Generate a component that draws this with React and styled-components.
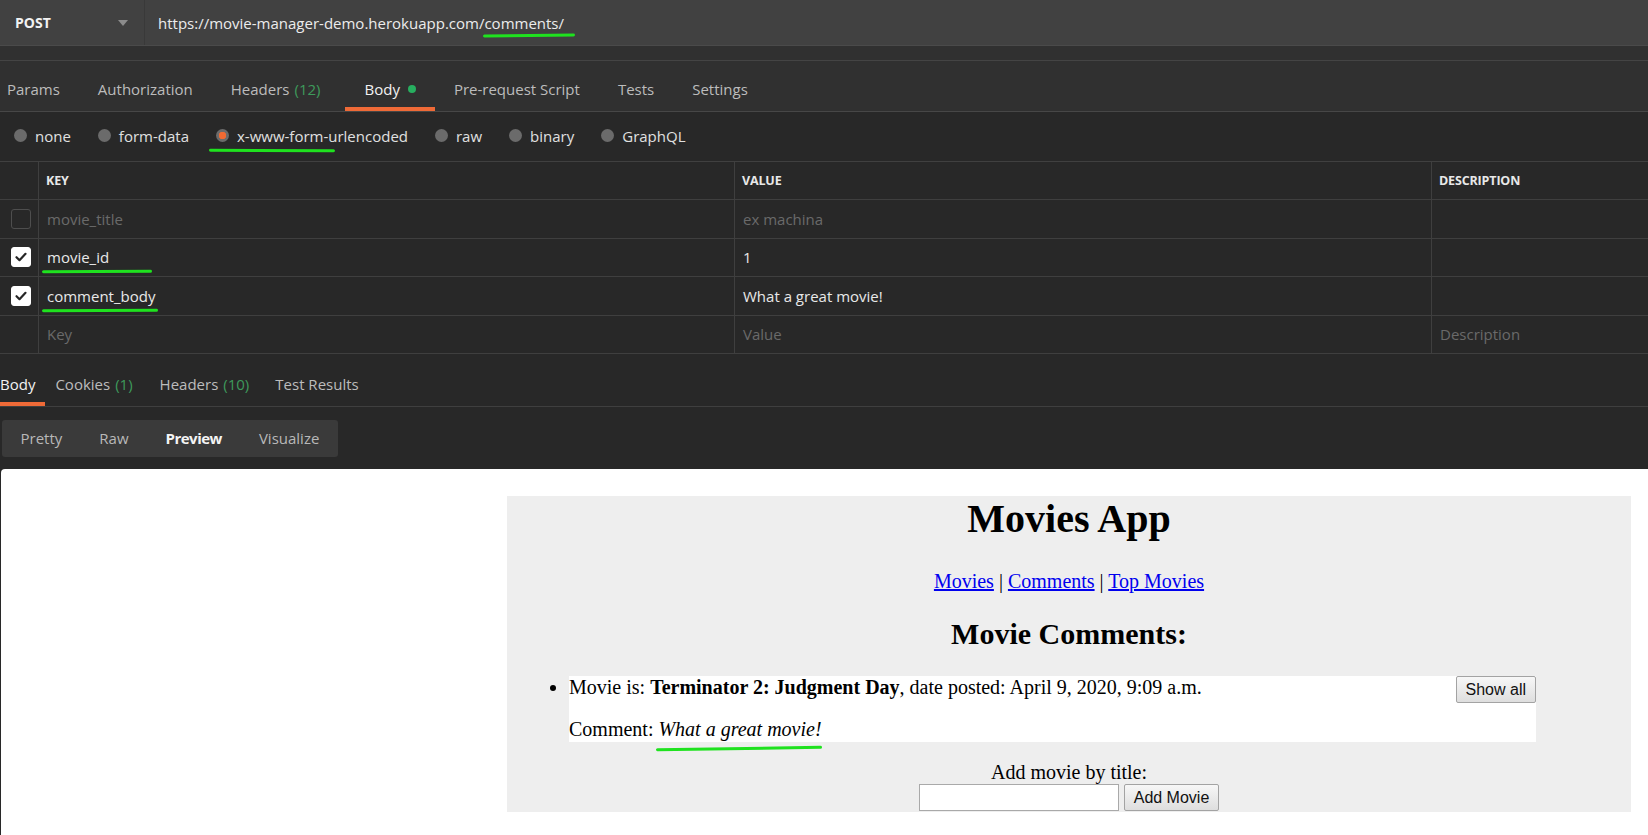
import React from 'react';
import styled, { createGlobalStyle } from 'styled-components';

const GlobalStyle = createGlobalStyle`
    html, body {
        margin: 0;
        padding: 0;
        background: #282828;
    }
    body {
        font-family: "Open Sans", "Liberation Sans", sans-serif;
        overflow: hidden;
    }
`;

const Page = styled.div`
    display: flex;
    flex-direction: column;
    height: 100vh;
`;

const Header = styled.div`
    background: #303030;
`;

const UrlBar = styled.div`
    display: flex;
    height: 45px;
    background: #414141;
    border-bottom: 1px solid #4a4a4a;
`;

const MethodSelect = styled.div`
    display: flex;
    align-items: center;
    justify-content: space-between;
    box-sizing: border-box;
    width: 145px;
    padding: 0 16px 0 15px;
    border-right: 1px solid #393939;
    color: #f2f2f2;
    font-size: 14px;
    font-weight: 700;
`;

const Caret = styled.span`
    width: 0;
    height: 0;
    border-left: 5px solid transparent;
    border-right: 5px solid transparent;
    border-top: 6px solid #8c8c8c;
`;

const UrlText = styled.div`
    display: flex;
    align-items: center;
    padding-left: 13px;
    color: #ececec;
    font-size: 15px;
`;

const Marked = styled.span`
    position: relative;
`;

const Scribble = styled.span`
    position: absolute;
    left: ${(p) => p.$left}px;
    top: ${(p) => p.$top}px;
    width: ${(p) => p.$width}px;
    height: 3px;
    border-radius: 2px;
    background: #1fe21f;
    transform: rotate(${(p) => p.$tilt || 0}deg);
    pointer-events: none;
`;

const Spacer = styled.div`
    height: 14px;
`;

const TabRow = styled.div`
    display: flex;
    height: 50px;
    border-top: 1px solid #444;
    border-bottom: 1px solid #474747;
    margin-left: -12px;
`;

const Tab = styled.div`
    display: flex;
    align-items: center;
    padding: 6px 19px 0;
    margin-right: ${(p) => p.$gap || 0}px;
    font-size: 15px;
    color: ${(p) => (p.$active ? '#f2f2f2' : '#bcbcbc')};
    box-shadow: ${(p) => (p.$active ? 'inset 0 -4px 0 #ef6a37' : 'none')};
`;

const Count = styled.span`
    margin-left: 5px;
    color: #3e9a5b;
`;

const Dot = styled.span`
    width: 8px;
    height: 8px;
    margin-left: 8px;
    border-radius: 50%;
    background: #27ae5f;
`;

const BodyTypes = styled.div`
    display: flex;
    align-items: center;
    gap: 27px;
    height: 50px;
    padding: 0 0 2px 14px;
    box-sizing: border-box;
    border-bottom: 1px solid #404040;
`;

const RadioOption = styled.label`
    position: relative;
    display: flex;
    align-items: center;
    gap: 8px;
    color: #e0e0e0;
    font-size: 15px;
`;

const RadioDot = styled.span`
    width: 13px;
    height: 13px;
    border-radius: 50%;
    background: ${(p) => (p.$checked
        ? 'radial-gradient(circle, #f06a33 0 3.5px, #6b6b6b 4px)'
        : '#6b6b6b')};
`;

const Row = styled.div`
    display: grid;
    grid-template-columns: 39px 696px 697px 1fr;
    height: ${(p) => (p.$head ? 37 : 37.5)}px;
    border-bottom: 1px solid #3f3f3f;
`;

const Cell = styled.div`
    display: flex;
    align-items: center;
    padding-left: ${(p) => (p.$head ? 7 : 8)}px;
    border-right: 1px solid #3f3f3f;
    font-size: ${(p) => (p.$head ? 12.5 : 15)}px;
    font-weight: ${(p) => (p.$head ? 700 : 400)};
    color: ${(p) => (p.$dim ? '#6a6a6a' : '#e8e8e8')};
    letter-spacing: ${(p) => (p.$head ? '-0.15px' : '0')};

    &:last-child {
        border-right: none;
    }
`;

const CheckCell = styled.div`
    display: flex;
    align-items: center;
    justify-content: center;
    padding-left: 3px;
    border-right: 1px solid #3f3f3f;
`;

const Checkbox = styled.span`
    display: flex;
    align-items: center;
    justify-content: center;
    box-sizing: border-box;
    width: 20px;
    height: 20px;
    border-radius: 3px;
    background: ${(p) => (p.$checked ? '#ffffff' : 'transparent')};
    border: 1px solid ${(p) => (p.$checked ? '#ffffff' : '#4e4e4e')};
`;

const ResponseTabs = styled.div`
    display: flex;
    height: 44px;
    margin-top: 8px;
    margin-left: -10px;
    border-bottom: 1px solid #3f3f3f;
`;

const ResponseTab = styled(Tab)`
    padding: 0 10px;
`;

const FormatBar = styled.div`
    padding: 13px 0 12px 2px;
`;

const Segmented = styled.div`
    display: inline-flex;
    height: 37px;
    border-radius: 3px;
    background: #3a3a3a;
`;

const SegItem = styled.span`
    display: flex;
    align-items: center;
    padding: 0 18.5px 2px;
    font-size: 15px;
    font-weight: ${(p) => (p.$active ? 700 : 400)};
    color: ${(p) => (p.$active ? '#f4f4f4' : '#b8b8b8')};
    letter-spacing: ${(p) => (p.$active ? '-0.5px' : '0')};
`;

const Preview = styled.div`
    flex: 1;
    margin-left: 1px;
    padding-top: 27px;
    background: #ffffff;
    border-radius: 4px 0 0 0;
    overflow: hidden;
`;

const MoviesBox = styled.div`
    width: 1124px;
    margin-left: 506px;
    padding: 0 0 1px;
    background: #eeeeee;
    color: #000;
    font-family: "Liberation Serif", "Times New Roman", serif;
    font-size: 20px;
    line-height: 23px;
    text-align: center;
`;

const Title = styled.h1`
    margin: 0;
    font-size: 40px;
    line-height: 46px;
`;

const Nav = styled.p`
    margin: 28px 0 0;
`;

const Link = styled.a`
    color: #0000ee;
    text-decoration: underline;
`;

const SectionTitle = styled.h2`
    margin: 23px 0 0;
    font-size: 30px;
    line-height: 35px;
`;

const CommentList = styled.ul`
    margin: 25px 95px 0 0;
    padding-left: 62px;
    text-align: left;
    list-style: disc;
`;

const CommentItem = styled.li`
    padding-bottom: 1px;
    background: #ffffff;
`;

const CommentLine = styled.div`
    margin-top: 19px;
`;

const NativeButton = styled.button`
    box-sizing: border-box;
    height: 27px;
    padding: 0 9px;
    border: 1px solid #a3a3a3;
    border-radius: 2px;
    background: linear-gradient(#f7f7f7, #dedede);
    color: #111;
    font-family: "Liberation Sans", Arial, sans-serif;
    font-size: 16px;
    line-height: 25px;
    float: ${(p) => (p.$right ? 'right' : 'none')};
`;

const AddForm = styled.div`
    margin-top: 19px;
`;

const InputRow = styled.div`
    display: flex;
    justify-content: center;
    gap: 5px;
`;

const TitleInput = styled.input`
    box-sizing: border-box;
    width: 200px;
    height: 27px;
    border: 1px solid #a9a9a9;
    background: #fff;
`;

const CheckMark = () => (
    <svg width="14" height="14" viewBox="0 0 14 14">
        <path d="M2.5 7.2l3 3 6-6.4" fill="none" stroke="#262626" strokeWidth="2.2" strokeLinecap="round" strokeLinejoin="round" />
    </svg>
);

const params = [
    { key: 'movie_title', value: 'ex machina', checked: false, dim: true },
    { key: 'movie_id', value: '1', checked: true, mark: 110 },
    { key: 'comment_body', value: 'What a great movie!', checked: true, mark: 116 },
];

const bodyTypes = ['none', 'form-data', 'x-www-form-urlencoded', 'raw', 'binary', 'GraphQL'];

const App = () => (
    <Page>
        <GlobalStyle />
        <Header>
            <UrlBar>
                <MethodSelect>
                    POST
                    <Caret />
                </MethodSelect>
                <UrlText>
                    https://movie-manager-demo.herokuapp.com/
                    <Marked>
                        comments/
                        <Scribble $left={-1} $top={21} $width={92} $tilt={-0.6} />
                    </Marked>
                </UrlText>
            </UrlBar>
            <Spacer />
            <TabRow>
                <Tab>Params</Tab>
                <Tab>Authorization</Tab>
                <Tab $gap={6}>Headers<Count>(12)</Count></Tab>
                <Tab $active>Body<Dot /></Tab>
                <Tab>Pre-request Script</Tab>
                <Tab>Tests</Tab>
                <Tab>Settings</Tab>
            </TabRow>
        </Header>
        <BodyTypes>
            {bodyTypes.map((type) => (
                <RadioOption key={type}>
                    <RadioDot $checked={type === 'x-www-form-urlencoded'} />
                    {type}
                    {type === 'x-www-form-urlencoded' && (
                        <Scribble $left={-7} $top={23} $width={126} $tilt={0.3} />
                    )}
                </RadioOption>
            ))}
        </BodyTypes>
        <div>
            <Row $head>
                <CheckCell />
                <Cell $head>KEY</Cell>
                <Cell $head>VALUE</Cell>
                <Cell $head>DESCRIPTION</Cell>
            </Row>
            {params.map((p) => (
                <Row key={p.key}>
                    <CheckCell>
                        <Checkbox $checked={p.checked}>{p.checked && <CheckMark />}</Checkbox>
                    </CheckCell>
                    <Cell $dim={p.dim}>
                        <Marked>
                            {p.key}
                            {p.mark && <Scribble $left={-5} $top={23} $width={p.mark} $tilt={-0.3} />}
                        </Marked>
                    </Cell>
                    <Cell $dim={p.dim}>{p.value}</Cell>
                    <Cell />
                </Row>
            ))}
            <Row>
                <CheckCell />
                <Cell $dim>Key</Cell>
                <Cell $dim>Value</Cell>
                <Cell $dim>Description</Cell>
            </Row>
        </div>
        <ResponseTabs>
            <ResponseTab $active>Body</ResponseTab>
            <ResponseTab $gap={7}>Cookies<Count>(1)</Count></ResponseTab>
            <ResponseTab $gap={6}>Headers<Count>(10)</Count></ResponseTab>
            <ResponseTab>Test Results</ResponseTab>
        </ResponseTabs>
        <FormatBar>
            <Segmented>
                <SegItem>Pretty</SegItem>
                <SegItem>Raw</SegItem>
                <SegItem $active>Preview</SegItem>
                <SegItem>Visualize</SegItem>
            </Segmented>
        </FormatBar>
        <Preview>
            <MoviesBox>
                <Title>Movies App</Title>
                <Nav>
                    <Link href="#movies">Movies</Link> | <Link href="#comments">Comments</Link> | <Link href="#top">Top Movies</Link>
                </Nav>
                <SectionTitle>Movie Comments:</SectionTitle>
                <CommentList>
                    <CommentItem>
                        <NativeButton $right>Show all</NativeButton>
                        Movie is: <b>Terminator 2: Judgment Day</b>, date posted: April 9, 2020, 9:09 a.m.
                        <CommentLine>
                            Comment:{' '}
                            <Marked>
                                <i>What a great movie!</i>
                                <Scribble $left={-2} $top={29} $width={166} $tilt={-0.8} />
                            </Marked>
                        </CommentLine>
                    </CommentItem>
                </CommentList>
                <AddForm>
                    Add movie by title:
                    <InputRow>
                        <TitleInput />
                        <NativeButton>Add Movie</NativeButton>
                    </InputRow>
                </AddForm>
            </MoviesBox>
        </Preview>
    </Page>
);

export default App;
